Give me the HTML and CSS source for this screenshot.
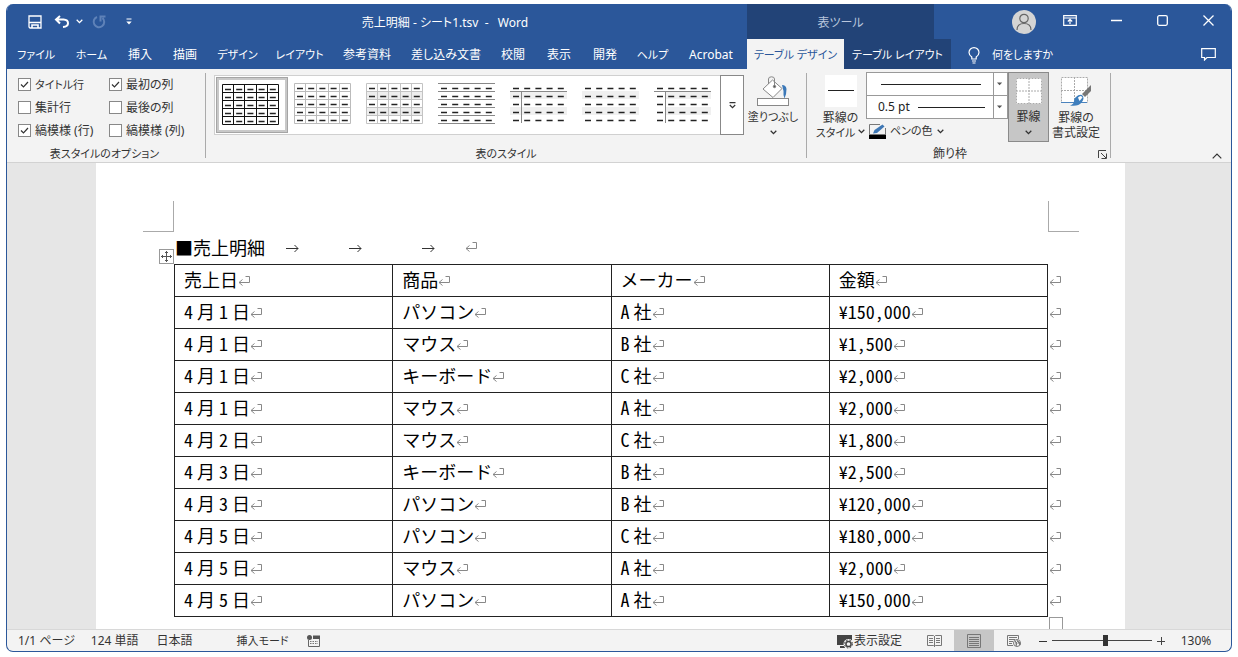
FILE: index.html
```html
<!DOCTYPE html>
<html lang="ja">
<head>
<meta charset="utf-8">
<title>売上明細 - シート1.tsv - Word</title>
<link rel="stylesheet" href="styles.css">
</head>
<body>
<svg class="defs" aria-hidden="true">
  <symbol id="chev" viewBox="0 0 7 5"><path d="M.7.8 3.5 3.6 6.3.8" fill="none" stroke="currentColor" stroke-width="1.3"/></symbol>
  <symbol id="dashes" viewBox="0 0 57 41"><g stroke="#222" stroke-width="1.3" stroke-dasharray="6 5.2"><path d="M3 5.500H56M3 13.500H56M3 21.500H56M3 29.500H56M3 37.500H56"/></g></symbol>
</svg>
<div class="window">
  <header class="titlebar">
    <div class="qat">
      <button class="q" aria-label="上書き保存"><svg width="14" height="14" viewBox="0 0 14 14" fill="none" stroke="#fff" stroke-width="1.3"><path d="M1 1H13V13H2L1 12Z"/><path d="M1 7.500H13"/><path d="M4 13V10H10V13" stroke-width="1.600"/></svg></button>
      <button class="q" aria-label="元に戻す"><svg width="16" height="13" viewBox="0 0 16 13" fill="none" stroke="#fff" stroke-width="2"><path d="M6 1 2 4.500 6 8.500M2 4.500H9.500Q14 4.800 14 8.200T9 12"/></svg></button>
      <button class="q narrow" aria-label="元に戻す一覧"><svg width="7" height="5"><use href="#chev"/></svg></button>
      <button class="q faded" aria-label="やり直し"><svg width="14" height="14" viewBox="0 0 14 14" fill="none" stroke="#5f82b8" stroke-width="2"><path d="M5 2A5.300 5.300 0 1 0 10.500 3M8.500 6.500V1.500H13.500"/></svg></button>
      <button class="q" aria-label="クイック アクセス ツール バーのユーザー設定"><svg width="6" height="7" viewBox="0 0 6 7"><path d="M.5 1H5.500" stroke="#fff"/><path d="M.3 3.500H5.700L3 6.500Z" fill="#fff"/></svg></button>
    </div>
    <div class="doc-title">売上明細 - シート1.tsv &nbsp;- &nbsp; Word</div>
    <div class="context-title">表ツール</div>
    <div class="window-buttons">
      <button class="account" aria-label="アカウント"><svg width="24" height="24" viewBox="0 0 24 24" fill="none" stroke="#666" stroke-width="1.2"><circle cx="12" cy="12" r="12" fill="#d4d4d4" stroke="none"/><circle cx="12" cy="8.500" r="4.200"/><path d="M5 20Q5 13.500 12 13.500T19 20"/></svg></button>
      <button aria-label="リボンの表示オプション"><svg width="14" height="11" viewBox="0 0 14 11" fill="none" stroke="#fff" stroke-width="1.200"><path d="M.7.7H13.300V10.300H.7ZM.7 3H13.300M7 9V4.500M4.800 6.500 7 4.400 9.200 6.500"/></svg></button>
      <button aria-label="最小化"><svg width="11" height="11"><path d="M0 5.500H11" stroke="#fff" stroke-width="1.300"/></svg></button>
      <button aria-label="最大化"><svg width="11" height="11" fill="none" stroke="#fff" stroke-width="1.300"><rect x=".7" y=".7" width="9.600" height="9.600" rx="1.500"/></svg></button>
      <button aria-label="閉じる"><svg width="11" height="11" stroke="#fff" stroke-width="1.300"><path d="M.5.5 10.500 10.500M10.500.5.5 10.500"/></svg></button>
    </div>
  </header>
  <nav class="tabs">
    <button class="kana">ファイル</button><button class="kana">ホーム</button><button>挿入</button><button>描画</button><button class="kana">デザイン</button><button class="kana">レイアウト</button><button>参考資料</button><button>差し込み文書</button><button>校閲</button><button>表示</button><button>開発</button><button class="kana">ヘルプ</button><button>Acrobat</button><button class="kana active">テーブル デザイン</button><button class="kana context">テーブル レイアウト</button>
    <button class="kana tell"><svg width="12" height="17" viewBox="0 0 12 17" fill="none" stroke="#fff" stroke-width="1.200"><path d="M3.800 12V10Q1 8 1 5.500A5 4.900 0 0 1 11 5.500Q11 8 8.200 10V12ZM4 14H8M4.500 16H7.500"/></svg>何をしますか</button>
    <button class="comment" aria-label="コメント"><svg width="15" height="13" viewBox="0 0 15 13" fill="none" stroke="#fff" stroke-width="1.200"><path d="M.7.7H14.300V9.500H6L3.500 12V9.500H.7Z"/></svg></button>
  </nav>
  <section class="ribbon">
    <div class="group options">
      <div class="checks">
        <label><input type="checkbox" checked><span class="kana">タイトル行</span></label><label><input type="checkbox" checked>最初の列</label>
        <label><input type="checkbox">集計行</label><label><input type="checkbox">最後の列</label>
        <label><input type="checkbox" checked>縞模様 (行)</label><label><input type="checkbox">縞模様 (列)</label>
      </div>
      <div class="group-label kana">表スタイルのオプション</div>
    </div>
    <div class="group styles">
      <div class="group-body">
        <div class="gallery">
          <button class="thumb selected" aria-label="表 (格子)"><svg width="57" height="41"><path d="M.5.500H56.500V40.500H.5ZM.5 8.500H56.500M.5 16.500H56.500M.5 24.500H56.500M.5 32.500H56.500M11.500 0V41M22.500 0V41M34.500 0V41M45.500 0V41" fill="none" stroke="#111"/><use href="#dashes"/></svg></button>
          <button class="thumb" aria-label="表 (格子) 淡色"><svg width="57" height="41"><path d="M.5.500H56.500V40.500H.5ZM.5 8.500H56.500M.5 16.500H56.500M.5 24.500H56.500M.5 32.500H56.500M11.500 0V41M22.500 0V41M34.500 0V41M45.500 0V41" fill="none" stroke="#bbb"/><use href="#dashes"/></svg></button>
          <button class="thumb" aria-label="標準の表 1"><svg width="57" height="41"><path d="M0 8H57V16H0ZM0 24H57V32H0Z" fill="#eee"/><path d="M.5.500H56.500V40.500H.5ZM.5 8.500H56.500M.5 16.500H56.500M.5 24.500H56.500M.5 32.500H56.500M11.500 0V41M22.500 0V41M34.500 0V41M45.500 0V41" fill="none" stroke="#c3c3c3"/><use href="#dashes"/></svg></button>
          <button class="thumb" aria-label="標準の表 2"><svg width="57" height="41"><path d="M0 .5H57M0 8.500H57M0 16.500H57M0 24.500H57M0 32.500H57M0 40.500H57" stroke="#888"/><use href="#dashes"/></svg></button>
          <button class="thumb" aria-label="標準の表 3"><svg width="57" height="41"><path d="M0 8H57V16H0ZM0 24H57V32H0Z" fill="#f0f0f0"/><path d="M0 8.500H57M11.500 8V40" stroke="#888"/><use href="#dashes"/></svg></button>
          <button class="thumb" aria-label="標準の表 4"><svg width="57" height="41"><path d="M0 8H57V16H0ZM0 24H57V32H0Z" fill="#f0f0f0"/><use href="#dashes"/></svg></button>
          <button class="thumb" aria-label="標準の表 5"><svg width="57" height="41"><path d="M12 8H57V16H12ZM12 24H57V32H12Z" fill="#f0f0f0"/><path d="M0 8.500H57M11.500 8V40" stroke="#888"/><use href="#dashes"/></svg></button>
          <button class="more" aria-label="その他"><svg width="7" height="7" viewBox="0 0 7 7" fill="none" stroke="#333" stroke-width="1.200"><path d="M.5.700H6.500M.8 3 3.500 5.700 6.200 3"/></svg></button>
        </div>
        <button class="big shading"><svg width="32" height="31" viewBox="0 0 32 31" fill="none" stroke="#888"><path d="M6 13 15.500 4 25 12.500 16 21.500Z" fill="#fff"/><path d="M11.500 8V3Q11.500.800 14.500.800T17.500 3V10"/><circle cx="17.500" cy="10.500" r="1.200" fill="#555"/><path d="M25 9Q29 9 29.500 13Q29.500 19 27.500 22.500Q26 20 26.500 15Z" fill="#3b78b8" stroke="none"/><rect x=".5" y="22.500" width="31" height="7" fill="#fff"/></svg><span class="kana">塗りつぶし</span><svg width="7" height="5"><use href="#chev"/></svg></button>
      </div>
      <div class="group-label kana">表のスタイル</div>
    </div>
    <div class="group borders">
      <div class="group-body">
        <button class="big border-style"><svg width="32" height="32"><path d="M0 0H32V32H0Z" fill="#fff"/><path d="M3 15.500H29" stroke="#222"/></svg><span>罫線の</span><span class="kana">スタイル <svg width="7" height="5"><use href="#chev"/></svg></span></button>
        <div class="pen">
          <select class="line-style" aria-label="ペンのスタイル"><option aria-label="実線"></option></select>
          <select class="line-weight" aria-label="ペンの太さ"><option>0.5 pt</option></select>
          <button class="pen-color"><svg width="17" height="15" viewBox="0 0 17 15"><path d="M.5 10V.5H11M16.500 4V10" fill="none" stroke="#777"/><path d="M0 10.500H17V15H0Z"/><path d="M4 9.500 5.500 6 13.500.500 15.500 2.500 8 9Z" fill="#3f78b5"/></svg><span class="kana">ペンの色</span><svg width="7" height="5"><use href="#chev"/></svg></button>
        </div>
        <button class="big pressed"><svg width="26" height="26" fill="none"><path d="M0 0H26V26H0Z" fill="#fff"/><path d="M.5.500H25.500V25.500H.5ZM13 0V26M0 13H26" stroke="#aaa" stroke-dasharray="2 1"/></svg><span>罫線</span><svg width="7" height="5"><use href="#chev"/></svg></button>
        <button class="big painter"><svg width="32" height="32" viewBox="0 0 32 32" fill="none"><path d="M1 1H27V27H1Z" fill="#fff"/><path d="M1.500 1.500H27.500V26.500H1.500ZM14.500 1V27M1 14.500H27" stroke="#aaa" stroke-dasharray="2 1"/><path d="M1 26.500H27" stroke="#4b83bd"/><path d="M31 9V15L25 21 22 18 26 14Z" fill="#777"/><path d="M16 21Q19 18 22 19Q25 22 22 26Q18 31 10 29.500Q14 28 14 25Q14 22 16 21Z" fill="#3f7fbd"/><path d="M18 21.500Q21 18.500 22.500 21.500L19.500 25Z" fill="#fff"/></svg><span>罫線の</span><span>書式設定</span></button>
      </div>
      <div class="group-label">飾り枠</div>
      <button class="launcher" aria-label="線種とページ罫線と網かけの設定"><svg width="9" height="9" viewBox="0 0 9 9" fill="none" stroke="#444"><path d="M.5 8V.5H8M3 3 8 8M8.500 3.500V8.500H3.500"/></svg></button>
    </div>
    <button class="collapse" aria-label="リボンを折りたたむ"><svg width="10" height="6" fill="none" stroke="#333" stroke-width="1.200"><path d="M.7 5.300 5 1 9.300 5.300"/></svg></button>
  </section>
  <main class="workspace">
    <article class="page">
      <div class="crops"><i class="crop left"></i><i class="crop right"></i></div>
      <div class="body-text">
        <h1>■売上明細<i class="tab-mark one"></i><i class="tab-mark two"></i><i class="tab-mark three"></i><i class="return"></i></h1>
        <button class="move-handle" aria-label="表の移動"><svg width="11" height="11" fill="none" stroke="#555"><path d="M5.500 0V11M0 5.500H11M4 2 5.500.500 7 2M4 9 5.500 10.500 7 9M2 4 .5 5.500 2 7M9 4 10.500 5.500 9 7"/></svg></button>
        <table>
          <tr><th>売上日</th><th>商品</th><th>メーカー</th><th>金額</th><td class="end"></td></tr>
          <tr><td><b>4</b> 月 <b>1</b> 日</td><td>パソコン</td><td><b>A</b> 社</td><td><b>¥150,000</b></td><td class="end"></td></tr>
          <tr><td><b>4</b> 月 <b>1</b> 日</td><td>マウス</td><td><b>B</b> 社</td><td><b>¥1,500</b></td><td class="end"></td></tr>
          <tr><td><b>4</b> 月 <b>1</b> 日</td><td>キーボード</td><td><b>C</b> 社</td><td><b>¥2,000</b></td><td class="end"></td></tr>
          <tr><td><b>4</b> 月 <b>1</b> 日</td><td>マウス</td><td><b>A</b> 社</td><td><b>¥2,000</b></td><td class="end"></td></tr>
          <tr><td><b>4</b> 月 <b>2</b> 日</td><td>マウス</td><td><b>C</b> 社</td><td><b>¥1,800</b></td><td class="end"></td></tr>
          <tr><td><b>4</b> 月 <b>3</b> 日</td><td>キーボード</td><td><b>B</b> 社</td><td><b>¥2,500</b></td><td class="end"></td></tr>
          <tr><td><b>4</b> 月 <b>3</b> 日</td><td>パソコン</td><td><b>B</b> 社</td><td><b>¥120,000</b></td><td class="end"></td></tr>
          <tr><td><b>4</b> 月 <b>5</b> 日</td><td>パソコン</td><td><b>C</b> 社</td><td><b>¥180,000</b></td><td class="end"></td></tr>
          <tr><td><b>4</b> 月 <b>5</b> 日</td><td>マウス</td><td><b>A</b> 社</td><td><b>¥2,000</b></td><td class="end"></td></tr>
          <tr><td><b>4</b> 月 <b>5</b> 日</td><td>パソコン</td><td><b>A</b> 社</td><td><b>¥150,000</b></td><td class="end"></td></tr>
        </table>
        <div class="resize-handle"></div>
      </div>
    </article>
  </main>
  <footer class="status">
    <div class="status-left">
      <button class="page-count">1/1 ページ</button><button>124 単語</button><button>日本語</button><button class="mode kana">挿入モード</button>
      <button aria-label="マクロの記録"><svg width="13" height="12" viewBox="0 0 13 12"><path d="M1.500 5V11.500H12.500V1.500H6" fill="none" stroke="#666"/><circle cx="2.500" cy="2.500" r="2.500" fill="#555"/><path d="M6 .5H13V4H6Z" fill="#555"/><path d="M3 6.500H11M3 8.500H11" stroke="#777" stroke-dasharray="1.500 1"/></svg></button>
    </div>
    <button class="display"><svg width="17" height="15" viewBox="0 0 17 15"><path d="M0 1H15V11H0ZM3 12H8V14H3Z" fill="#444"/><circle cx="11.500" cy="10" r="5" fill="#f3f3f3"/><circle cx="11.500" cy="10" r="2.600" fill="none" stroke="#444" stroke-width="1.500"/><circle cx="11.500" cy="10" r="4" fill="none" stroke="#444" stroke-dasharray="1.600 1.600"/></svg>表示設定</button>
    <button class="view" aria-label="閲覧モード"><svg width="15" height="12" viewBox="0 0 15 12" fill="none" stroke="#777"><path d="M7.500 1V12M.5.500H6.500L7.500 1.500 8.500.500H14.500V10.500H8.500L7.500 11.500 6.500 10.500H.5ZM2 3.500H6M2 5.500H6M2 7.500H6M9 3.500H13M9 5.500H13M9 7.500H13"/></svg></button>
    <button class="view on" aria-label="印刷レイアウト"><svg width="14" height="14" viewBox="0 0 14 14" fill="none" stroke="#777"><path d="M.5.500H13.500V13.500H.5ZM2 3.500H12M2 5.500H12M2 7.500H12M2 9.500H12M2 11.500H12"/></svg></button>
    <button class="view" aria-label="Web レイアウト"><svg width="14" height="12" viewBox="0 0 14 12" fill="none" stroke="#777"><path d="M6 10.500H.5V.500H11.500V4M2 2.500H10M2 4.500H8M2 6.500H6M2 8.500H5"/><circle cx="10" cy="8" r="3.500"/><path d="M8 6 10 8 9 11M10 5.500 13 8V10Z" fill="#777"/></svg></button>
    <div class="zoom">
      <button aria-label="縮小"><svg width="8" height="8"><path d="M0 4.500H8" stroke="#333"/></svg></button>
      <input type="range" min="10" max="190" value="106" aria-label="ズーム">
      <button aria-label="拡大"><svg width="8" height="8"><path d="M0 4.500H8M4.500 0V8" stroke="#444"/></svg></button>
      <button class="percent">130%</button>
    </div>
  </footer>
</div>
</body>
</html>
```

FILE: styles.css
```css
* { box-sizing: border-box; }
:root {
  --blue: #2b579a;
  --navy: #224377;
  --ret: url("data:image/svg+xml,%3Csvg xmlns='http://www.w3.org/2000/svg' width='12' height='12' fill='none' stroke='%23888'%3E%3Cpath d='M4.5 4.500 1 7.500 4.500 10.500M1 7.500H11.500V1.500H7.500'/%3E%3C/svg%3E");
  --arrow: url("data:image/svg+xml,%3Csvg xmlns='http://www.w3.org/2000/svg' width='7' height='5'%3E%3Cpath d='M0 .5H6L3 4Z' fill='%23555'/%3E%3C/svg%3E");
}
body {
  margin: 0;
  padding: 4px 6px 5px;
  background: #fff;
  font-family: "Noto Sans", "Noto Sans CJK JP", sans-serif;
  font-size: 12px;
  line-height: 16px;
  color: #333;
}
button {
  margin: 0;
  padding: 0;
  border: 0;
  background: none;
  color: inherit;
  font: inherit;
  white-space: nowrap;
}
button, label, .group-label, .doc-title, .context-title { font-feature-settings: "palt"; }
.kana { font-size: 11px; }
svg { flex: none; }
.defs { position: absolute; width: 0; height: 0; }
.window {
  display: flex;
  flex-direction: column;
  height: calc(100vh - 9px);
  overflow: hidden;
  border: 1px solid var(--blue);
  border-top: 0;
  border-radius: 7px;
  background: #f3f3f3;
}

/* Title bar */
.titlebar { display: flex; height: 35px; background: var(--blue); color: #fff; }
.qat { display: flex; align-items: center; width: 136px; padding-left: 14px; }
.q { display: flex; align-items: center; justify-content: center; width: 28px; height: 32px; }
.q.narrow { width: 8px; }
.q.faded { width: 34px; }
.doc-title { flex: 1; text-align: center; line-height: 38px; }
.context-title { width: 187px; text-align: center; line-height: 38px; background: var(--navy); color: #b9c6dc; }
.window-buttons { display: grid; grid-template-columns: 46px 46px 46px 46px 46px; justify-content: end; width: 297px; }
.window-buttons button { display: flex; align-items: center; justify-content: center; height: 32px; }
.window-buttons .account { height: 35px; }

/* Tabs */
.tabs {
  display: grid;
  grid-template-columns: 58px 53px 44px 46px 59px 65px 70px 88px 46px 46px 46px 49px 68px 99px 107px 1fr 46px;
  height: 30px;
  background: var(--blue);
  color: #fff;
}
.tabs button { padding-top: 2px; }
.tabs .active { margin-left: 2px; background: #f3f3f3; color: var(--blue); }
.tabs .context { background: var(--navy); }
.tabs .tell { display: flex; align-items: center; gap: 12px; padding-left: 17px; }
.tabs .comment { display: flex; align-items: center; justify-content: center; padding-top: 0; }

/* Ribbon */
.ribbon { display: flex; height: 94px; border-bottom: 1px solid #d2d2d2; }
.group { position: relative; display: flex; flex-direction: column; padding-top: 3px; }
.group::after { content: ""; position: absolute; top: 4px; right: 0; bottom: 4px; border-right: 1px solid #aaa; }
.group-body { display: flex; height: 75px; }
.group-label { text-align: center; }
.options { width: 199px; }
.options .group-label { padding-right: 4px; }
.styles { width: 601px; padding-left: 8px; }
.styles .group-label { padding-right: 9px; }
.borders { width: 304px; padding-left: 8px; }
.borders .group-label { padding-right: 26px; }
.checks { display: grid; grid-template-columns: 91px 90px; grid-template-rows: 23px 23px 23px; height: 75px; padding: 1px 0 0 11px; }
.checks label { display: flex; align-items: center; gap: 4px; white-space: nowrap; }
.checks input {
  appearance: none;
  width: 13px;
  height: 13px;
  margin: 0;
  border: 1px solid #888;
  background: #fff;
}
.checks input:checked { background: #fff url("data:image/svg+xml,%3Csvg xmlns='http://www.w3.org/2000/svg' width='11' height='11' fill='none' stroke='%23333' stroke-width='1.2'%3E%3Cpath d='M2 5.500 4.500 8 9 3'/%3E%3C/svg%3E") center no-repeat; }
.gallery { display: flex; align-items: stretch; height: 60px; margin-top: 3px; padding-left: 1px; border: 1px solid #d0d0d0; border-right: 0; background: #fff; }
.thumb { display: flex; align-items: center; justify-content: center; width: 72px; padding: 0 4px 3px 0; }
.thumb.selected { margin: 1px 0; padding: 0 4px 2px 0; border: 3px solid #c8c8c8; outline: 1px solid #a5a5a5; outline-offset: -1px; }
.gallery .more { display: flex; align-items: center; justify-content: center; width: 24px; margin: -1px 0; border: 1px solid #888; }
.big { display: flex; flex-direction: column; align-items: center; }
.shading { width: 58px; padding-top: 4px; }
.shading span { line-height: 20px; margin-bottom: 3px; }
.border-style { width: 51px; padding-top: 3px; }
.border-style span, .painter span { line-height: 15px; }
.border-style svg:first-child { margin-bottom: 3px; }
.pen { display: flex; flex-direction: column; width: 142px; }
.pen select {
  appearance: none;
  height: 24px;
  margin: 0;
  padding: 0 0 0 11px;
  border: 1px solid #999;
  border-radius: 0;
  color: #222;
  font: inherit;
}
.line-style { background: var(--arrow) right 4px center / 6px 4px no-repeat, linear-gradient(#999, #999) right 13px top / 1px 100% no-repeat, linear-gradient(#222, #222) 14px center / 100px 1px no-repeat, #fff; }
.pen .line-weight { margin-top: -1px; background: var(--arrow) right 4px center / 6px 4px no-repeat, linear-gradient(#999, #999) right 13px top / 1px 100% no-repeat, linear-gradient(#222, #222) 51px center / 67px 1px no-repeat, #fff; }
.pen-color { display: flex; align-items: center; gap: 4px; height: 24px; padding-left: 3px; }
.pressed { width: 41px; height: 70px; padding-top: 5px; border: 1px solid #8a8a8a; background: #c6c6c6; }
.pressed span { line-height: 20px; margin: 3px 0; }
.painter { width: 54px; padding-top: 4px; }
.painter svg { margin-bottom: 2px; }
.launcher { position: absolute; right: 4px; bottom: 3px; width: 9px; height: 9px; display: flex; }
.collapse { display: flex; margin: auto 9px 3px auto; }

/* Document */
.workspace { flex: 1; min-height: 0; overflow: hidden; padding: 0 106px 0 89px; background: #e6e6e6; }
.page { height: 100%; padding-top: 38px; background: #fff; }
.crops { display: flex; justify-content: space-between; padding: 0 46px 0 47px; }
.crop { width: 31px; height: 31px; border-bottom: 1px solid #aaa; }
.crop.left { border-right: 1px solid #aaa; }
.crop.right { border-left: 1px solid #aaa; }
.body-text {
  position: relative;
  padding: 0 63px 0 78px;
  font-family: "Noto Sans CJK JP", sans-serif;
  font-size: 18px;
  color: #000;
}
h1 { display: flex; align-items: center; height: 32px; margin: 0; padding: 0 0 2px 1px; font-size: 18px; font-weight: 400; }
.tab-mark {
  width: 13px;
  height: 11px;
  background: url("data:image/svg+xml,%3Csvg xmlns='http://www.w3.org/2000/svg' width='13' height='11' fill='none' stroke='%23333'%3E%3Cpath d='M0 6.500H12M8.500 3 12 6.500 8.500 10'/%3E%3C/svg%3E") no-repeat;
}
.one { margin-left: 21px; }
.two { margin-left: 50px; }
.three { margin-left: 60px; }
.return { width: 12px; height: 12px; margin-left: 30px; background: var(--ret) no-repeat; }
.move-handle { position: absolute; left: 63px; top: 17px; display: flex; padding: 1px; border: 1px solid #999; background: #fff; }
table { width: 100%; border-collapse: collapse; table-layout: fixed; }
th, td { height: 32px; padding: 0 9px 3px; border: 1px solid #222; text-align: left; font-weight: 400; line-height: 22px; white-space: nowrap; }
td b { font-weight: 400; font-feature-settings: "hwid"; }
th::after, td::after { content: ""; display: inline-block; width: 12px; height: 12px; background: var(--ret) no-repeat; }
.end { width: 14px; padding: 0 0 3px 1px; border: 0; }
.resize-handle { width: 14px; height: 14px; margin-left: auto; margin-right: -1px; border: 1px solid #999; }

/* Status bar */
.status { display: flex; flex: none; height: 22px; border-top: 1px solid #d8d8d8; }
.status button { display: flex; align-items: center; justify-content: center; padding-top: 1px; }
.status-left { display: flex; flex: 1; padding-left: 11px; }
.status-left button { margin-right: 18px; }
.status-left .page-count { margin-right: 16px; }
.status-left .mode { margin-left: 26px; }
.status .display { margin-right: 12px; }
.status .view { width: 40px; }
.status .on { background: #c6c6c6; }
.zoom { display: flex; align-items: center; margin-left: 5px; padding-right: 17px; gap: 5px; }
.zoom input { appearance: none; width: 100px; height: 12px; margin: 0; background: linear-gradient(#444, #444) center / 100% 1px no-repeat; }
.zoom input::-webkit-slider-thumb { appearance: none; width: 5px; height: 11px; background: #333; }
.zoom .percent { width: 36px; margin-left: 8px; }
```
